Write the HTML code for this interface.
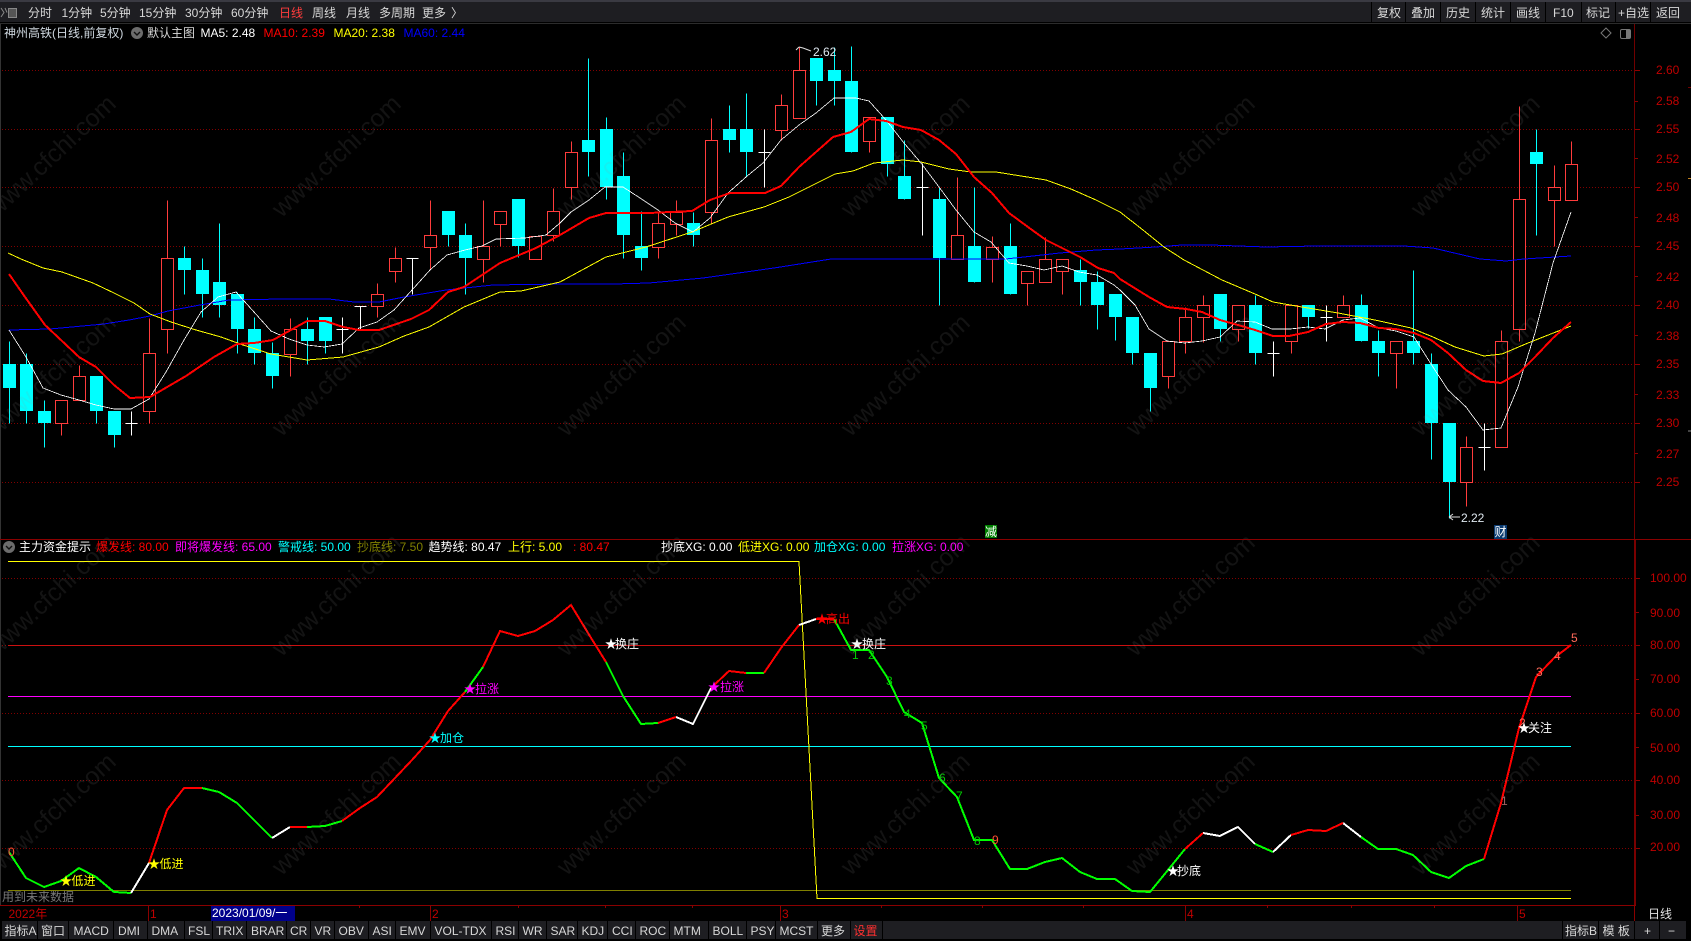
<!DOCTYPE html>
<html lang="zh"><head><meta charset="utf-8"><title>神州高铁</title>
<style>
html,body{margin:0;padding:0;background:#000;width:1691px;height:941px;overflow:hidden}
svg{display:block;position:absolute;left:0;top:0}
text{font-family:"Liberation Sans","Noto Sans CJK SC",sans-serif;font-size:12px;white-space:pre}
.tb text{fill:#d8d8d8;font-size:12px}
.ax text{fill:#c00000;font-size:12px}
.wm text{font-size:25px;fill:rgba(150,150,150,.13);text-anchor:middle}
.lb text{font-size:12px}
.dg{fill:#00cc00}.rg{fill:#ff6a5a}
</style></head><body>
<svg width="1691" height="941" viewBox="0 0 1691 941" xmlns="http://www.w3.org/2000/svg">
<rect width="1691" height="941" fill="#000"/>
<!-- grid -->
<g stroke="#800000" stroke-width="1" stroke-dasharray="1 2" shape-rendering="crispEdges">
<path d="M2 70.5H1634M2 129.5H1634M2 187.5H1634M2 246.5H1634M2 305.5H1634M2 364.5H1634M2 423.5H1634M2 482.5H1634"/>
<path d="M2 578.5H1634M2 645.5H1634M2 713.5H1634M2 780.5H1634M2 848.5H1634"/>
</g>
<!-- candles -->
<g shape-rendering="crispEdges">
<g transform="translate(.5 .5)" stroke="#00ffff" fill="none">
<path d="M9 341V423M26 353V423M44 400V447M96 376V423M114 411V447M184 246V294M202 258V317M219 223V317M237 292V353M254 317V364M272 342V388M307 317V364M325 317V353M448 211V246M465 223V294M518 199V257M588 58V176M606 117V199M623 152V258M641 211V270M693 212V246M729 105V152M746 93V176M816 58V105M834 47V105M851 46V152M887 117V176M904 140V199M939 187V305M974 187V282M1010 223V294M1080 259V305M1097 271V329M1115 294V340M1132 317V364M1150 353V411M1220 294V341M1255 295V364M1308 305V328M1361 294V341M1378 330V376M1413 270V364M1431 353V459M1449 423V518M1536 129V235"/>
</g>
<path fill="#00ffff" d="M3 364h13V388h-13zM20 364h13V411h-13zM38 411h13V423h-13zM90 376h13V411h-13zM108 411h13V435h-13zM178 258h13V270h-13zM196 270h13V294h-13zM213 282h13V305h-13zM231 294h13V329h-13zM248 329h13V353h-13zM266 353h13V376h-13zM301 329h13V341h-13zM319 317h13V341h-13zM442 211h13V235h-13zM459 235h13V258h-13zM512 199h13V246h-13zM582 140h13V152h-13zM600 129h13V187h-13zM617 176h13V235h-13zM635 246h13V258h-13zM687 223h13V235h-13zM723 129h13V140h-13zM740 129h13V152h-13zM810 58h13V81h-13zM828 70h13V81h-13zM845 81h13V152h-13zM881 117h13V164h-13zM898 176h13V199h-13zM933 199h13V258h-13zM968 246h13V282h-13zM1004 246h13V294h-13zM1074 270h13V282h-13zM1091 282h13V305h-13zM1109 294h13V317h-13zM1126 317h13V353h-13zM1144 353h13V388h-13zM1214 294h13V329h-13zM1249 305h13V353h-13zM1302 305h13V317h-13zM1355 305h13V341h-13zM1372 341h13V353h-13zM1407 341h13V353h-13zM1425 364h13V423h-13zM1443 423h13V482h-13zM1530 152h13V164h-13z"/>
<g transform="translate(.5 .5)" stroke="#ff3c3c" fill="#000">
<path fill="none" d="M61 423V435M79 365V376M149 318V353M149 411V423M167 200V258M167 329V353M290 318V329M290 354V376M377 283V294M377 306V317M395 247V258M395 271V282M430 200V235M430 247V269M483 200V246M483 259V282M500 224V246M553 188V211M553 235V241M571 141V152M571 187V199M658 212V223M658 247V258M676 200V212M676 224V235M711 118V140M711 212V223M781 94V105M781 130V140M799 47V70M869 141V152M957 177V235M992 236V247M992 259V282M1027 283V305M1045 237V259M1062 271V294M1168 376V388M1185 307V317M1185 341V353M1203 295V305M1203 317V342M1238 329V341M1291 341V353M1343 295V305M1396 353V388M1466 436V447M1466 482V506M1501 330V341M1519 106V199M1519 329V341M1554 165V187M1554 200V246M1571 141V164"/>
<path d="M55 400H67V423H55zM73 376H85V400H73zM143 353H155V411H143zM161 258H173V329H161zM284 329H296V354H284zM371 294H383V306H371zM389 258H401V271H389zM424 235H436V247H424zM477 246H489V259H477zM494 211H506V224H494zM529 236H541V259H529zM547 211H559V235H547zM565 152H577V187H565zM652 223H664V247H652zM670 212H682V224H670zM705 140H717V212H705zM775 105H787V130H775zM793 70H805V118H793zM863 117H875V141H863zM951 235H963V259H951zM986 247H998V259H986zM1021 271H1033V283H1021zM1039 259H1051V282H1039zM1056 259H1068V271H1056zM1162 341H1174V376H1162zM1179 317H1191V341H1179zM1197 305H1209V317H1197zM1232 305H1244V329H1232zM1285 305H1297V341H1285zM1337 305H1349V317H1337zM1390 341H1402V353H1390zM1460 447H1472V482H1460zM1495 341H1507V447H1495zM1513 199H1525V329H1513zM1548 187H1560V200H1548zM1565 164H1577V200H1565z"/>
</g>
<g transform="translate(.5 .5)" stroke="#ffffff" fill="none">
<path d="M131 411V435M125 423H137M342 317V353M336 329H348M360 306V329M354 306H366M412 258V294M406 258H418M764 129V187M758 152H770M922 163V235M916 187H928M1273 341V376M1267 353H1279M1326 305V341M1320 317H1332M1484 423V470M1478 447H1490"/>
</g>
</g>
<!-- MA lines -->
<g fill="none" shape-rendering="crispEdges" stroke-linejoin="round">
<polyline stroke="#0000ff" stroke-width="1" points="9,330 50,329 104,324 129,320 150,316 168,311 200,305 229,300 282,299 329,299 354,302 379,302 404,297 446,290 493,285 560,284 614,284 649,283 703,278 774,268 831,259 896,259 1006,259 1060,253 1096,250 1120,249 1156,247 1182,245 1211,245 1266,247 1317,246 1404,246 1433,248 1480,259 1506,261 1524,259 1571,256"/>
<polyline stroke="#ffff00" stroke-width="1" points="8,253 21,259 43,268 62,272 93,283 114,293 134,303 150,314 171,322 196,330 221,337 243,345 271,354 307,360 343,357 379,347 404,336 429,327 464,307 500,292 521,291 560,282 606,257 646,247 692,232 728,217 764,207 789,197 835,174 853,171 874,163 903,160 921,162 949,169 971,172 996,172 1046,180 1071,189 1096,200 1120,212 1143,230 1164,247 1184,260 1222,280 1255,294 1273,302 1302,307 1338,313 1375,320 1411,328 1433,337 1455,347 1484,356 1502,354 1528,343 1571,326"/>
<polyline stroke="#ffffff" stroke-width=".8" points="9,330 26,357 43,388 61,395 79,400 96,405 114,409 131,409 149,399 166,372 184,340 201,312 218,297 236,292 254,312 271,331 289,339 307,345 324,347 342,344 359,328 377,322 394,310 412,290 430,270 447,255 465,250 482,246 496,239 525,238 546,235 560,223 571,212 589,200 605,187 623,187 640,198 658,210 675,223 693,232 710,218 728,193 746,177 763,163 781,140 799,125 816,113 834,98 856,98 869,101 886,120 904,143 921,163 939,187 956,210 974,232 991,242 1009,263 1027,266 1044,270 1062,266 1079,272 1097,275 1114,285 1120,290 1135,305 1149,329 1167,341 1185,343 1202,341 1220,337 1237,321 1255,322 1272,329 1290,329 1308,327 1325,329 1343,320 1360,318 1379,328 1396,331 1414,337 1431,364 1448,390 1466,407 1483,430 1501,428 1518,387 1535,333 1553,263 1571,212"/>
<polyline stroke="#ff0000" stroke-width="2" points="9,274 25,297 45,325 79,357 96,367 114,385 130,398 150,397 186,376 214,357 237,344 254,343 273,340 307,321 325,321 343,327 359,330 379,330 411,319 429,310 448,292 464,287 500,263 536,248 560,235 589,218 606,213 649,213 692,211 710,200 730,193 765,193 781,186 799,167 833,137 851,132 869,119 886,121 903,127 921,130 939,140 956,154 974,177 992,193 1009,213 1028,227 1046,240 1062,248 1080,257 1098,268 1114,273 1120,279 1149,297 1167,307 1186,309 1202,312 1220,320 1238,325 1255,330 1273,336 1289,336 1308,332 1326,324 1343,322 1360,323 1379,328 1396,329 1414,333 1431,340 1448,353 1466,370 1483,381 1501,383 1519,373 1535,357 1553,338 1571,322"/>
</g>
<!-- lower panel lines -->
<g shape-rendering="crispEdges" fill="none">
<path stroke="#cc1010" d="M8 645.5H1571"/>
<path stroke="#ff00ff" d="M8 696.5H1571"/>
<path stroke="#00ffff" d="M8 746.5H1571"/>
<path stroke="#808000" d="M8 890.5H1571"/>
<polyline stroke="#ffff00" stroke-width="1" points="8,561.5 799,561.5 817,898.5 1571,898.5"/>
<g stroke-width="2">
<polyline stroke="#00ff00" points="9,852 26,878 44,887 61,881 79,868 96,877 114,892 131,893"/>
<polyline stroke="#00ff00" points="202,788 219,792 237,803 254,820 272,838"/>
<polyline stroke="#00ff00" points="307,827 325,826 342,821"/>
<polyline stroke="#00ff00" points="465,692 483,667"/>
<polyline stroke="#00ff00" points="606,662 623,696 641,724 658,723"/>
<polyline stroke="#00ff00" points="746,673 764,673"/>
<polyline stroke="#00ff00" points="834,619 851,650 869,650 887,677 904,712 922,723 939,778 957,797 974,840 992,840 1010,869 1027,869 1045,862 1062,858 1080,872 1097,879 1115,879 1132,891 1150,892 1168,870 1185,849"/>
<polyline stroke="#00ff00" points="1255,844 1273,852"/>
<polyline stroke="#00ff00" points="1361,837 1378,849 1396,849 1413,855 1431,872 1449,878 1466,866 1484,859"/>
<polyline stroke="#ffffff" points="131,893 149,863"/>
<polyline stroke="#ffffff" points="272,838 290,827"/>
<polyline stroke="#ffffff" points="676,717 693,724 711,688"/>
<polyline stroke="#ffffff" points="799,625 816,619"/>
<polyline stroke="#ffffff" points="1203,833 1220,836 1238,827 1255,844"/>
<polyline stroke="#ffffff" points="1273,852 1291,835"/>
<polyline stroke="#ffffff" points="1343,823 1361,837"/>
<polyline stroke="#ff0000" points="149,863 167,810 184,788 202,788"/>
<polyline stroke="#ff0000" points="290,827 307,827"/>
<polyline stroke="#ff0000" points="342,821 360,808 377,797 395,778 412,760 430,740 448,711 465,692"/>
<polyline stroke="#ff0000" points="483,667 500,631 518,636 535,631 553,620 571,605 588,633 606,662"/>
<polyline stroke="#ff0000" points="658,723 676,717"/>
<polyline stroke="#ff0000" points="711,688 729,671 746,673"/>
<polyline stroke="#ff0000" points="764,673 781,648 799,625"/>
<polyline stroke="#ff0000" points="816,619 834,619"/>
<polyline stroke="#ff0000" points="1185,849 1203,833"/>
<polyline stroke="#ff0000" points="1291,835 1308,830 1326,831 1343,823"/>
<polyline stroke="#ff0000" points="1484,859 1501,803 1519,728 1536,677 1554,658 1571,645"/>
</g>
</g>
<!-- digits -->
<g class="lb">
<text x="8" y="856" fill="#ff5030">0</text>
<text class="dg" x="852" y="659">1</text><text class="dg" x="868" y="659">2</text><text class="dg" x="886" y="685">3</text><text class="dg" x="904" y="718">4</text><text class="dg" x="921" y="730">5</text><text class="dg" x="939" y="782">6</text><text class="dg" x="956" y="800">7</text><text class="dg" x="974" y="845">8</text>
<text x="992" y="844" fill="#ff5030">9</text>
<text x="1501" y="805" fill="#a06060">1</text><text class="rg" x="1519" y="727">2</text><text class="rg" x="1536" y="676">3</text><text class="rg" x="1554" y="660">4</text><text class="rg" x="1571" y="642">5</text>
</g>
<!-- signal labels -->
<g class="lb">
<text x="60" y="885" fill="#ffff00">★<tspan x="71.5">低进</tspan></text>
<text x="148" y="868" fill="#ffff00">★<tspan x="159.5">低进</tspan></text>
<text x="429" y="742" fill="#00ffff">★<tspan x="440">加仓</tspan></text>
<text x="464" y="693" fill="#ff00ff">★<tspan x="475">拉涨</tspan></text>
<text x="605" y="648" fill="#ffffff">★<tspan x="615">换庄</tspan></text>
<text x="708" y="691" fill="#ff00ff">★<tspan x="720">拉涨</tspan></text>
<text x="816" y="623" fill="#ff0000">★<tspan x="826">高出</tspan></text>
<text x="851" y="648" fill="#ffffff">★<tspan x="862">换庄</tspan></text>
<text x="1167" y="875" fill="#ffffff">★<tspan x="1177">抄底</tspan></text>
<text x="1518" y="732" fill="#ffffff">★<tspan x="1528">关注</tspan></text>
</g>
<!-- hi/lo markers -->
<path d="M799 47l-3 3M799 47l4 1 8 3" stroke="#ddd" fill="none"/>
<text x="813" y="56" fill="#dfe8f0">2.62</text>
<path d="M1449 517H1460M1449 517l4-3M1449 517l4 3" stroke="#ddd" fill="none"/>
<text x="1461" y="522" fill="#dfe8f0">2.22</text>
<rect x="985" y="525" width="12" height="13" fill="#008000"/>
<text x="985" y="536" fill="#fff">减</text>
<rect x="1494" y="525" width="13" height="14" fill="#0a3a70"/>
<text x="1494.5" y="536" fill="#fff">财</text>
<!-- watermark -->
<g class="wm">
<text x="57" y="162" transform="rotate(-43 57 162)">www.cfchi.com</text><text x="342" y="162" transform="rotate(-43 342 162)">www.cfchi.com</text><text x="627" y="162" transform="rotate(-43 627 162)">www.cfchi.com</text><text x="911" y="162" transform="rotate(-43 911 162)">www.cfchi.com</text><text x="1196" y="162" transform="rotate(-43 1196 162)">www.cfchi.com</text><text x="1481" y="162" transform="rotate(-43 1481 162)">www.cfchi.com</text>
<text x="57" y="381" transform="rotate(-43 57 381)">www.cfchi.com</text><text x="342" y="381" transform="rotate(-43 342 381)">www.cfchi.com</text><text x="627" y="381" transform="rotate(-43 627 381)">www.cfchi.com</text><text x="911" y="381" transform="rotate(-43 911 381)">www.cfchi.com</text><text x="1196" y="381" transform="rotate(-43 1196 381)">www.cfchi.com</text><text x="1481" y="381" transform="rotate(-43 1481 381)">www.cfchi.com</text>
<text x="57" y="601" transform="rotate(-43 57 601)">www.cfchi.com</text><text x="342" y="601" transform="rotate(-43 342 601)">www.cfchi.com</text><text x="627" y="601" transform="rotate(-43 627 601)">www.cfchi.com</text><text x="911" y="601" transform="rotate(-43 911 601)">www.cfchi.com</text><text x="1196" y="601" transform="rotate(-43 1196 601)">www.cfchi.com</text><text x="1481" y="601" transform="rotate(-43 1481 601)">www.cfchi.com</text>
<text x="57" y="820" transform="rotate(-43 57 820)">www.cfchi.com</text><text x="342" y="820" transform="rotate(-43 342 820)">www.cfchi.com</text><text x="627" y="820" transform="rotate(-43 627 820)">www.cfchi.com</text><text x="911" y="820" transform="rotate(-43 911 820)">www.cfchi.com</text><text x="1196" y="820" transform="rotate(-43 1196 820)">www.cfchi.com</text><text x="1481" y="820" transform="rotate(-43 1481 820)">www.cfchi.com</text>
</g>
<text x="2" y="901" fill="#777">用到未来数据</text>
<!-- frame / axes -->
<g shape-rendering="crispEdges">
<rect x="0" y="23" width="1" height="882" fill="#333"/>
<rect x="1635" y="23" width="56" height="516" fill="#000"/>
<rect x="1634" y="23" width="1" height="516" fill="#700000"/>
<rect x="1634" y="540" width="2" height="366" fill="#7a0000"/>
<rect x="0" y="539" width="1691" height="1" fill="#8a0000"/>
<rect x="0" y="905" width="1636" height="1" fill="#8a0000"/>
<path stroke="#900000" d="M1635 70.5h5M1635 101.5h3M1635 129.5h5M1635 158.5h3M1635 187.5h5M1635 217.5h3M1635 246.5h5M1635 276.5h3M1635 305.5h5M1635 335.5h3M1635 364.5h5M1635 394.5h3M1635 423.5h5M1635 453.5h3M1635 482.5h5M1636 578.5h4M1636 612.5h3M1636 645.5h4M1636 679.5h3M1636 713.5h4M1636 747.5h3M1636 780.5h4M1636 815.5h3M1636 848.5h4"/>
<rect x="1688" y="87" width="3" height="1" fill="#700000"/>
<rect x="1688" y="178" width="3" height="1" fill="#c08020"/>
<rect x="1688" y="430" width="3" height="2" fill="#444"/>
</g>
<g class="ax">
<text x="1656" y="74">2.60</text><text x="1656" y="105">2.58</text><text x="1656" y="133">2.55</text><text x="1656" y="163">2.52</text><text x="1656" y="191">2.50</text><text x="1656" y="222">2.48</text><text x="1656" y="250">2.45</text><text x="1656" y="281">2.42</text><text x="1656" y="309">2.40</text><text x="1656" y="340">2.38</text><text x="1656" y="368">2.35</text><text x="1656" y="399">2.33</text><text x="1656" y="427">2.30</text><text x="1656" y="458">2.27</text><text x="1656" y="486">2.25</text>
<text x="1650" y="582">100.00</text><text x="1650" y="617">90.00</text><text x="1650" y="649">80.00</text><text x="1650" y="683">70.00</text><text x="1650" y="717">60.00</text><text x="1650" y="752">50.00</text><text x="1650" y="784">40.00</text><text x="1650" y="819">30.00</text><text x="1650" y="851">20.00</text>
</g>
<!-- info lines -->
<text x="4" y="37" fill="#cfd8e0">神州高铁(日线,前复权)</text>
<circle cx="137" cy="33" r="6" fill="#6c6c6c"/><path d="M134 32l3 3 3-3" stroke="#111" stroke-width="1.4" fill="none"/>
<text x="147" y="37" fill="#d8d8d8">默认主图</text>
<text x="200.5" y="37" fill="#ffffff">MA5: 2.48</text>
<text x="263.5" y="37" fill="#ff0000">MA10: 2.39</text>
<text x="333.5" y="37" fill="#ffff00">MA20: 2.38</text>
<text x="403.5" y="37" fill="#0000ff">MA60: 2.44</text>
<path d="M1606 28l5 5-5 5-5-5z" stroke="#777" fill="none"/>
<rect x="1620.5" y="29.5" width="10" height="9" rx="1.5" stroke="#777" fill="none"/><rect x="1626" y="30" width="4" height="8" fill="#777"/>
<circle cx="9" cy="547" r="6" fill="#6c6c6c"/><path d="M6 546l3 3 3-3" stroke="#111" stroke-width="1.4" fill="none"/>
<text x="19" y="551" fill="#fff">主力资金提示</text>
<text x="96" y="551" fill="#ff0000">爆发线: 80.00</text>
<text x="175" y="551" fill="#ff00ff">即将爆发线: 65.00</text>
<text x="278" y="551" fill="#00ffff">警戒线: 50.00</text>
<text x="357" y="551" fill="#808000">抄底线: 7.50</text>
<text x="428.5" y="551" fill="#fff">趋势线: 80.47</text>
<text x="508" y="551" fill="#ffff00">上行: 5.00</text>
<text x="573" y="551" fill="#ff0000">: 80.47</text>
<text x="661" y="551" fill="#fff">抄底XG: 0.00</text>
<text x="738" y="551" fill="#ffff00">低进XG: 0.00</text>
<text x="814" y="551" fill="#00ffff">加仓XG: 0.00</text>
<text x="892" y="551" fill="#ff00ff">拉涨XG: 0.00</text>
<!-- top toolbar -->
<g shape-rendering="crispEdges">
<rect x="0" y="0" width="1691" height="22" fill="#1e1e22"/>
<rect x="0" y="0" width="1691" height="2" fill="#3a3a42"/>
<rect x="0" y="23" width="1691" height="1" fill="#2c2c2c"/>
<path fill="#000" d="M1371 2h1v20h-1zM1405 2h1v20h-1zM1440 2h1v20h-1zM1475 2h1v20h-1zM1510 2h1v20h-1zM1545 2h1v20h-1zM1581 2h1v20h-1zM1615 2h1v20h-1zM1650 2h1v20h-1z"/>
</g>
<rect x="8.5" y="8.5" width="8" height="9" fill="#555" stroke="#888"/><path d="M1 8l3 4.5L1 17M5 8l2 4.5" stroke="#888" fill="none"/>
<g class="tb">
<text x="28" y="17">分时</text><text x="61.5" y="17">1分钟</text><text x="100" y="17">5分钟</text><text x="139" y="17">15分钟</text><text x="185" y="17">30分钟</text><text x="231" y="17">60分钟</text><text x="279" y="17" style="fill:#ff3c3c">日线</text><text x="312" y="17">周线</text><text x="346" y="17">月线</text><text x="379" y="17">多周期</text><text x="422" y="17">更多</text><text x="451" y="17">〉</text>
<text x="1377" y="17">复权</text><text x="1411" y="17">叠加</text><text x="1446" y="17">历史</text><text x="1481" y="17">统计</text><text x="1516" y="17">画线</text><text x="1553" y="17">F10</text><text x="1586" y="17">标记</text><text x="1618" y="17">+自选</text><text x="1656" y="17">返回</text>
</g>
<!-- date row -->
<rect x="211" y="906" width="84" height="15" fill="#00008b"/>
<path stroke="#8a0000" shape-rendering="crispEdges" d="M148.5 905v16M430.5 905v16M780.5 905v16M1185.5 905v16M1517.5 905v16M1634.5 905v16M359.5 905v3M518.5 905v3M605.5 905v3M692.5 905v3M881.5 905v3M982.5 905v3M1083.5 905v3M1267.5 905v3M1351.5 905v3M1434.5 905v3"/>
<g class="ax">
<text x="8.5" y="918">2022年</text><text x="150" y="918">1</text><text x="432" y="918">2</text><text x="782" y="918">3</text><text x="1187" y="918">4</text><text x="1519" y="918">5</text>
</g>
<text x="212" y="917" fill="#fff">2023/01/09/一</text>
<text x="1648" y="918" fill="#e0e0e0">日线</text>
<!-- bottom toolbar -->
<g shape-rendering="crispEdges">
<rect x="0" y="921" width="1691" height="18" fill="#1e1e22"/>
<rect x="0" y="939" width="1691" height="2" fill="#000"/>
<path fill="#000" d="M0 921h2v18h-2zM37 921h1v18h-1zM68 921h1v18h-1zM113 921h1v18h-1zM147 921h1v18h-1zM184 921h1v18h-1zM212 921h1v18h-1zM246 921h1v18h-1zM286 921h1v18h-1zM310 921h1v18h-1zM334 921h1v18h-1zM368 921h1v18h-1zM395 921h1v18h-1zM430 921h1v18h-1zM491 921h1v18h-1zM518 921h1v18h-1zM546 921h1v18h-1zM577 921h1v18h-1zM607 921h1v18h-1zM635 921h1v18h-1zM669 921h1v18h-1zM708 921h1v18h-1zM746 921h1v18h-1zM775 921h1v18h-1zM817 921h1v18h-1zM850 921h1v18h-1zM882 921h1v18h-1zM1562 921h1v18h-1zM1598 921h1v18h-1zM1634 921h1v18h-1zM1659 921h1v18h-1zM1686 921h5v20h-5z"/>
</g>
<g class="tb">
<text x="4.5" y="935">指标A</text><text x="41" y="935">窗口</text><text x="73.5" y="935">MACD</text><text x="118" y="935">DMI</text><text x="151.5" y="935">DMA</text><text x="188" y="935">FSL</text><text x="216" y="935">TRIX</text><text x="251" y="935">BRAR</text><text x="290" y="935">CR</text><text x="314.5" y="935">VR</text><text x="338.5" y="935">OBV</text><text x="372.5" y="935">ASI</text><text x="399.5" y="935">EMV</text><text x="434.5" y="935">VOL-TDX</text><text x="495.5" y="935">RSI</text><text x="522.5" y="935">WR</text><text x="550.5" y="935">SAR</text><text x="581.5" y="935">KDJ</text><text x="612" y="935">CCI</text><text x="639.5" y="935">ROC</text><text x="673.5" y="935">MTM</text><text x="712.5" y="935">BOLL</text><text x="750.5" y="935">PSY</text><text x="779.5" y="935">MCST</text><text x="821" y="935">更多</text><text x="853.5" y="935" style="fill:#ff3030">设置</text>
<text x="1565" y="935">指标B</text><text x="1602.5" y="935">模 板</text><text x="1644" y="935">+</text><text x="1668" y="935">−</text>
</g>
</svg>
</body></html>
